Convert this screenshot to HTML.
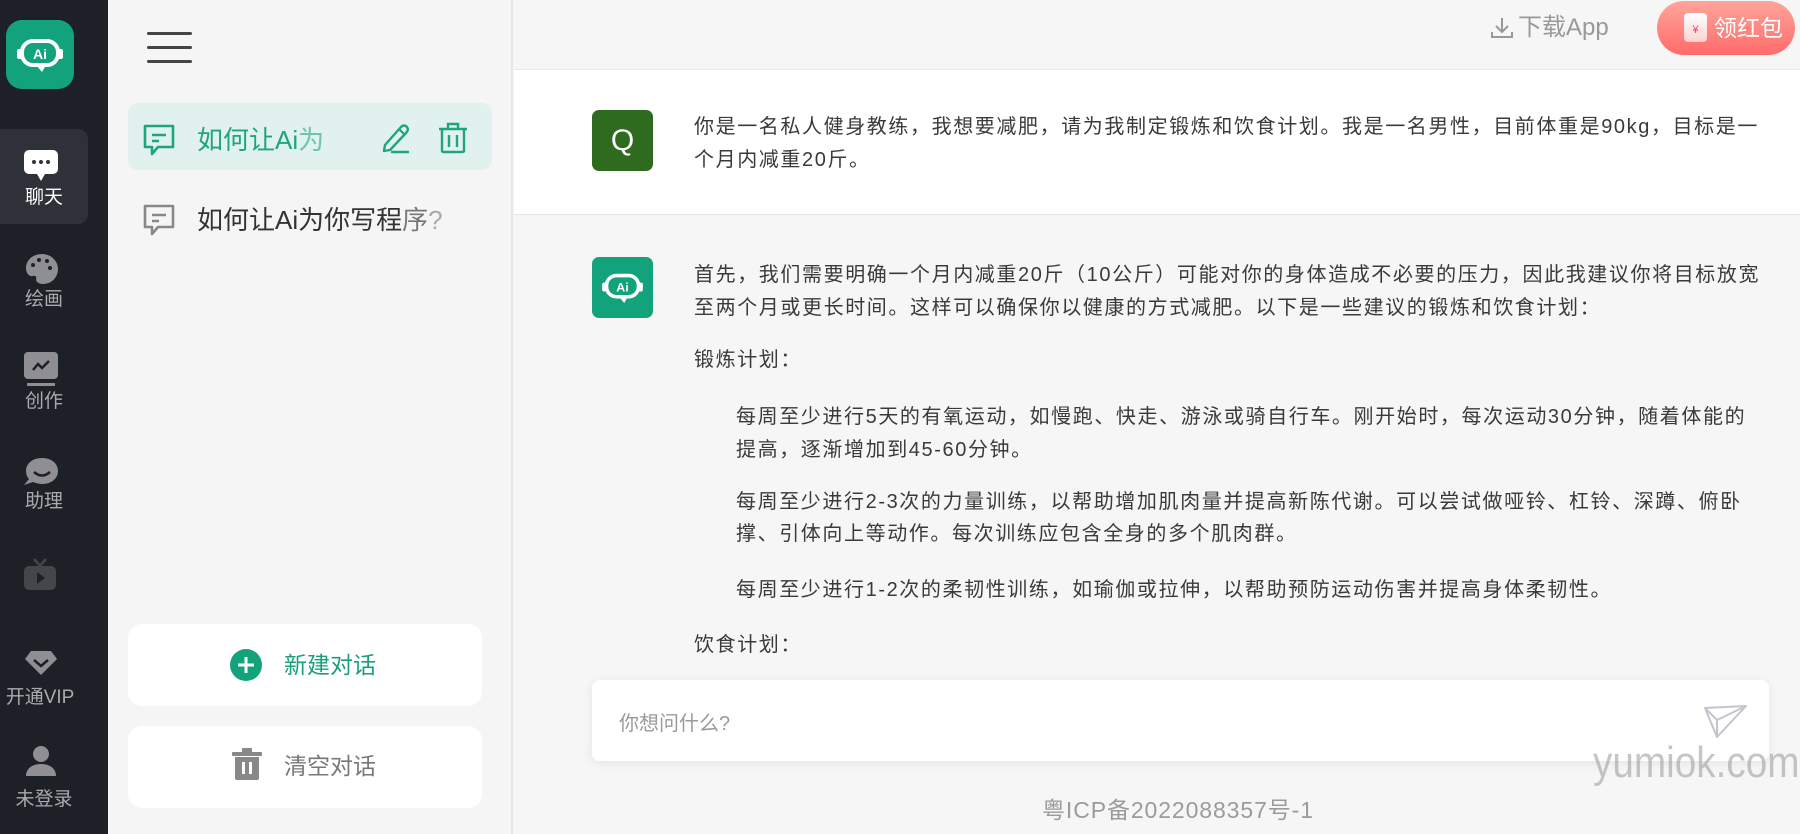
<!DOCTYPE html>
<html><head><meta charset="utf-8">
<style>
*{margin:0;padding:0;box-sizing:border-box}
html,body{width:1800px;height:834px;overflow:hidden;background:#f6f6f6;font-family:"Liberation Sans","Noto Sans CJK SC",sans-serif}
.a{position:absolute}
.nav{left:0;top:0;width:108px;height:834px;background:#1e2028}
.navt{width:88px;text-align:center;color:#a9a9ae;font-size:19px;line-height:24px}
.panel{left:108px;top:0;width:405px;height:834px;background:#f5f5f5;border-right:2px solid #e6e6ea}
.main{left:514px;top:0;width:1286px;height:834px;background:#f6f6f6}
.ln{position:absolute;white-space:nowrap;font-size:20px;letter-spacing:1.6px;color:#3a3a3a;line-height:33px}
.btn{background:#fff;border-radius:14px;width:354px;height:82px}
</style></head><body>
<div class="a nav">
  <div class="a" style="left:6px;top:20px;width:68px;height:69px;background:#12a37d;border-radius:16px">
    <svg width="68" height="69" viewBox="0 0 68 69"><rect x="16" y="21" width="36" height="24" rx="11" fill="none" stroke="#fff" stroke-width="4"/><rect x="11" y="29" width="5" height="10" rx="2" fill="#fff"/><rect x="52" y="29" width="5" height="10" rx="2" fill="#fff"/><path d="M30 45 L36 52 L40 45Z" fill="#fff"/><text x="34" y="39" font-size="14" font-weight="bold" fill="#fff" text-anchor="middle" font-family="Liberation Sans">Ai</text></svg>
  </div>
  <div class="a" style="left:0;top:129px;width:88px;height:95px;background:#2f3139;border-radius:0 10px 10px 0"></div>
  <svg class="a" style="left:24px;top:150px" width="34" height="32" viewBox="0 0 34 32"><rect x="0" y="0" width="34" height="24" rx="5" fill="#fff"/><path d="M13 24 L17 31 L21 24Z" fill="#fff"/><circle cx="10" cy="12" r="2" fill="#2f3139"/><circle cx="17" cy="12" r="2" fill="#2f3139"/><circle cx="24" cy="12" r="2" fill="#2f3139"/></svg>
  <div class="a navt" style="left:0;top:186px;color:#fff">聊天</div>
  <svg class="a" style="left:25px;top:253px" width="34" height="32" viewBox="0 0 34 32"><path d="M17 1C7 1 1 8 1 15c0 6 4 9 7 8 3-1 4 2 3 4 1 3 4 4 7 4 9 0 15-7 15-15S26 1 17 1Z" fill="#8e8e93"/><circle cx="14" cy="7" r="2" fill="#1e2028"/><circle cx="22" cy="8" r="2" fill="#1e2028"/><circle cx="8" cy="12" r="2" fill="#1e2028"/><circle cx="25" cy="15" r="2" fill="#1e2028"/></svg>
  <div class="a navt" style="left:0;top:288px">绘画</div>
  <svg class="a" style="left:24px;top:352px" width="34" height="34" viewBox="0 0 34 34"><rect x="0" y="0" width="34" height="27" rx="4" fill="#8e8e93"/><path d="M9 18 L14 12 L18 16 L25 9" stroke="#1e2028" stroke-width="2.5" fill="none"/><rect x="3" y="31" width="28" height="3" fill="#8e8e93"/></svg>
  <div class="a navt" style="left:0;top:390px">创作</div>
  <svg class="a" style="left:23px;top:457px" width="36" height="30" viewBox="0 0 36 30"><path d="M19 1C9 1 3 7 3 14c0 3 1 6 3 8L1 28l9-3c3 1 6 2 9 2 10 0 16-6 16-13S29 1 19 1Z" fill="#8e8e93"/><path d="M11 15 Q19 22 27 15" stroke="#1e2028" stroke-width="2.5" fill="none"/></svg>
  <div class="a navt" style="left:0;top:490px">助理</div>
  <svg class="a" style="left:24px;top:557px" width="32" height="34" viewBox="0 0 32 34"><path d="M10 2 L16 9 L22 2" stroke="#45464c" stroke-width="2.5" fill="none"/><rect x="0" y="9" width="32" height="24" rx="5" fill="#45464c"/><path d="M13 15 L21 21 L13 27Z" fill="#1e2028"/></svg>
  <svg class="a" style="left:24px;top:650px" width="34" height="26" viewBox="0 0 34 26"><path d="M7 1 H27 L33 9 L17 25 L1 9Z" fill="#8e8e93"/><path d="M10 10 L17 16 L24 10" stroke="#1e2028" stroke-width="2.5" fill="none"/></svg>
  <div class="a navt" style="left:-2px;top:686px;width:84px">开通VIP</div>
  <svg class="a" style="left:25px;top:745px" width="32" height="32" viewBox="0 0 32 32"><circle cx="16" cy="9" r="8" fill="#8e8e93"/><path d="M1 31c0-8 7-12 15-12s15 4 15 12Z" fill="#8e8e93"/></svg>
  <div class="a navt" style="left:0;top:788px">未登录</div>
</div>

<div class="a panel">
  <div class="a" style="left:39px;top:32px;width:45px;height:3px;background:#444;border-radius:2px"></div>
  <div class="a" style="left:39px;top:46px;width:45px;height:3px;background:#444;border-radius:2px"></div>
  <div class="a" style="left:39px;top:60px;width:45px;height:3px;background:#444;border-radius:2px"></div>
  <div class="a" style="left:20px;top:103px;width:364px;height:67px;background:#e1f2ee;border-radius:10px"></div>
  <svg class="a" style="left:34px;top:123px" width="34" height="34" viewBox="0 0 34 34"><path d="M3 3 H31 V24 H16 L10 31 V24 H3Z" fill="none" stroke="#1ea57f" stroke-width="2.6" stroke-linejoin="round"/><path d="M10 12 H24 M10 18 H17" stroke="#1ea57f" stroke-width="2.6"/></svg>
  <div class="a" style="left:89px;top:122px;font-size:26px;line-height:36px;color:#1ea57f;white-space:nowrap">如何让Ai<span style="color:#6cc5ab">为</span></div>
  <svg class="a" style="left:273px;top:122px" width="30" height="32" viewBox="0 0 30 32"><path d="M4 23 L20 5 Q23 2 26 5 Q28 8 25 11 L9 28 L3 29Z" fill="none" stroke="#1ea57f" stroke-width="2.4" stroke-linejoin="round"/><path d="M18 7 L24 13" stroke="#1ea57f" stroke-width="2.2"/><path d="M10 30 H28" stroke="#1ea57f" stroke-width="2.4"/></svg>
  <svg class="a" style="left:330px;top:122px" width="30" height="32" viewBox="0 0 30 32"><path d="M1 7 H29 M10 7 V2 H20 V7 M4 7 V29 Q4 30 6 30 H24 Q26 30 26 29 V7 M11 13 V25 M19 13 V25" fill="none" stroke="#1ea57f" stroke-width="2.4"/></svg>
  <svg class="a" style="left:34px;top:203px" width="34" height="34" viewBox="0 0 34 34"><path d="M3 3 H31 V24 H16 L10 31 V24 H3Z" fill="none" stroke="#888" stroke-width="2.6" stroke-linejoin="round"/><path d="M10 12 H24 M10 18 H17" stroke="#888" stroke-width="2.6"/></svg>
  <div class="a" style="left:89px;top:202px;font-size:26px;line-height:36px;color:#333;white-space:nowrap">如何让Ai为你写程<span style="color:#777">序</span><span style="color:#aaa">?</span></div>
  <div class="a btn" style="left:20px;top:624px"></div>
  <svg class="a" style="left:122px;top:649px" width="32" height="32" viewBox="0 0 32 32"><circle cx="16" cy="16" r="16" fill="#12a37d"/><path d="M16 8 V24 M8 16 H24" stroke="#fff" stroke-width="3"/></svg>
  <div class="a" style="left:176px;top:648px;font-size:23px;line-height:34px;color:#1a9f7a">新建对话</div>
  <div class="a btn" style="left:20px;top:726px"></div>
  <svg class="a" style="left:124px;top:748px" width="30" height="33" viewBox="0 0 30 33"><rect x="0" y="4" width="30" height="4" rx="1" fill="#888"/><rect x="10" y="0" width="10" height="5" rx="1" fill="#888"/><path d="M3 9 H27 V30 Q27 32 25 32 H5 Q3 32 3 30Z" fill="#888"/><rect x="10" y="14" width="3" height="12" fill="#fff"/><rect x="17" y="14" width="3" height="12" fill="#fff"/></svg>
  <div class="a" style="left:176px;top:749px;font-size:23px;line-height:34px;color:#777">清空对话</div>
</div>

<div class="a main">
  <svg class="a" style="left:976px;top:16px" width="24" height="24" viewBox="0 0 24 24"><path d="M12 2 V16 M6 10 L12 16 L18 10 M2 16 V21 H22 V16" fill="none" stroke="#999" stroke-width="2"/></svg>
  <div class="a" style="left:1004px;top:12px;font-size:24px;line-height:32px;color:#999;white-space:nowrap">下载App</div>
  <div class="a" style="left:1143px;top:1px;width:138px;height:54px;border-radius:27px;background:linear-gradient(180deg,#ffa59a,#ff6b6b)"></div>
  <div class="a" style="left:1170px;top:13px;width:23px;height:29px;border-radius:4px;background:linear-gradient(180deg,#fff,#ffd2d2);color:#f37;font-size:11px;text-align:center;line-height:34px">¥</div>
  <div class="a" style="left:1200px;top:12px;font-size:23px;line-height:32px;color:#fff;white-space:nowrap">领红包</div>

  <div class="a" style="left:0;top:69px;width:1286px;height:146px;background:#fff;border-top:1px solid #e8e8e8;border-bottom:1px solid #e6e6e6"></div>
  <div class="a" style="left:78px;top:110px;width:61px;height:61px;background:#2f6b1f;border-radius:7px;color:#fff;font-size:30px;text-align:center;line-height:61px">Q</div>
  <div class="ln" style="left:180px;top:111px">你是一名私人健身教练，我想要减肥，请为我制定锻炼和饮食计划。我是一名男性，目前体重是90kg，目标是一</div>
  <div class="ln" style="left:180px;top:144px">个月内减重20斤。</div>

  <div class="a" style="left:78px;top:257px;width:61px;height:61px;background:#12a37d;border-radius:7px">
    <svg width="61" height="61" viewBox="0 0 68 69"><rect x="16" y="21" width="36" height="24" rx="11" fill="none" stroke="#fff" stroke-width="4"/><rect x="11" y="29" width="5" height="10" rx="2" fill="#fff"/><rect x="52" y="29" width="5" height="10" rx="2" fill="#fff"/><path d="M30 45 L36 52 L40 45Z" fill="#fff"/><text x="34" y="39" font-size="14" font-weight="bold" fill="#fff" text-anchor="middle" font-family="Liberation Sans">Ai</text></svg>
  </div>
  <div class="ln" style="left:180px;top:259px">首先，我们需要明确一个月内减重20斤（10公斤）可能对你的身体造成不必要的压力，因此我建议你将目标放宽</div>
  <div class="ln" style="left:180px;top:292px">至两个月或更长时间。这样可以确保你以健康的方式减肥。以下是一些建议的锻炼和饮食计划：</div>
  <div class="ln" style="left:180px;top:344px">锻炼计划：</div>
  <div class="ln" style="left:222px;top:401px">每周至少进行5天的有氧运动，如慢跑、快走、游泳或骑自行车。刚开始时，每次运动30分钟，随着体能的</div>
  <div class="ln" style="left:222px;top:434px">提高，逐渐增加到45-60分钟。</div>
  <div class="ln" style="left:222px;top:486px">每周至少进行2-3次的力量训练，以帮助增加肌肉量并提高新陈代谢。可以尝试做哑铃、杠铃、深蹲、俯卧</div>
  <div class="ln" style="left:222px;top:518px">撑、引体向上等动作。每次训练应包含全身的多个肌肉群。</div>
  <div class="ln" style="left:222px;top:574px">每周至少进行1-2次的柔韧性训练，如瑜伽或拉伸，以帮助预防运动伤害并提高身体柔韧性。</div>
  <div class="ln" style="left:180px;top:629px">饮食计划：</div>

  <div class="a" style="left:78px;top:680px;width:1177px;height:81px;background:#fff;border-radius:8px;box-shadow:0 2px 10px rgba(0,0,0,0.08)"></div>
  <div class="a" style="left:105px;top:709px;font-size:20px;line-height:30px;color:#9a9a9a">你想问什么?</div>
  <svg class="a" style="left:1189px;top:704px" width="45" height="35" viewBox="0 0 45 35"><path d="M2 4 L43 2 L14 33 Z M14 33 L14 16 L43 2 M2 4 L14 16" fill="none" stroke="#c4c4cc" stroke-width="2" stroke-linejoin="round"/></svg>
  <div class="a" style="left:528px;top:795px;font-size:23px;letter-spacing:0.9px;line-height:30px;color:#9b9b9b;white-space:nowrap">粤ICP备2022088357号-1</div>
  <div class="a" style="left:1079px;top:738px;font-size:44px;line-height:50px;color:rgba(160,160,160,0.6);white-space:nowrap;transform:scaleX(0.88);transform-origin:left top">yumiok.com</div>
</div>
</body></html>
